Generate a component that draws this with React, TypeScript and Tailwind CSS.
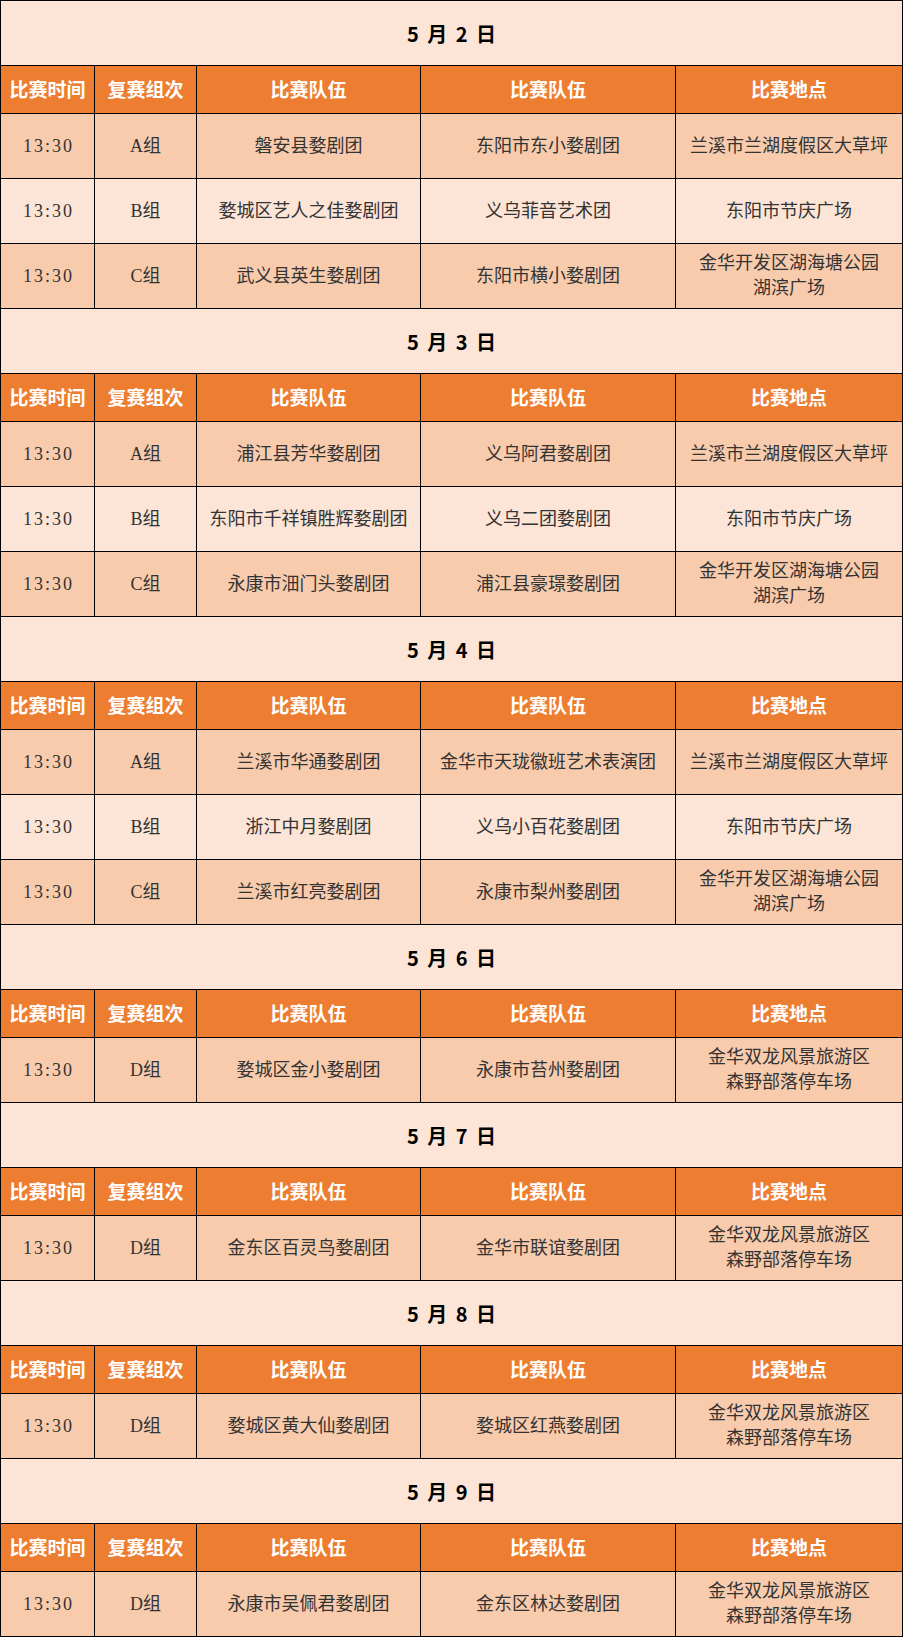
type Match = {
  time: string
  group: string
  teamA: string
  teamB: string
  place: string[]
}

type Day = {
  date: string
  matches: Match[]
}

const LANXI = ["兰溪市兰湖度假区大草坪"]
const DONGYANG = ["东阳市节庆广场"]
const JINHUA = ["金华开发区湖海塘公园", "湖滨广场"]
const SHUANGLONG = ["金华双龙风景旅游区", "森野部落停车场"]

const days: Day[] = [
  {
    date: "5 月 2 日",
    matches: [
      { time: "13:30", group: "A组", teamA: "磐安县婺剧团", teamB: "东阳市东小婺剧团", place: LANXI },
      { time: "13:30", group: "B组", teamA: "婺城区艺人之佳婺剧团", teamB: "义乌菲音艺术团", place: DONGYANG },
      { time: "13:30", group: "C组", teamA: "武义县英生婺剧团", teamB: "东阳市横小婺剧团", place: JINHUA },
    ],
  },
  {
    date: "5 月 3 日",
    matches: [
      { time: "13:30", group: "A组", teamA: "浦江县芳华婺剧团", teamB: "义乌阿君婺剧团", place: LANXI },
      { time: "13:30", group: "B组", teamA: "东阳市千祥镇胜辉婺剧团", teamB: "义乌二团婺剧团", place: DONGYANG },
      { time: "13:30", group: "C组", teamA: "永康市沺门头婺剧团", teamB: "浦江县豪璟婺剧团", place: JINHUA },
    ],
  },
  {
    date: "5 月 4 日",
    matches: [
      { time: "13:30", group: "A组", teamA: "兰溪市华通婺剧团", teamB: "金华市天珑徽班艺术表演团", place: LANXI },
      { time: "13:30", group: "B组", teamA: "浙江中月婺剧团", teamB: "义乌小百花婺剧团", place: DONGYANG },
      { time: "13:30", group: "C组", teamA: "兰溪市红亮婺剧团", teamB: "永康市梨州婺剧团", place: JINHUA },
    ],
  },
  {
    date: "5 月 6 日",
    matches: [
      { time: "13:30", group: "D组", teamA: "婺城区金小婺剧团", teamB: "永康市苔州婺剧团", place: SHUANGLONG },
    ],
  },
  {
    date: "5 月 7 日",
    matches: [
      { time: "13:30", group: "D组", teamA: "金东区百灵鸟婺剧团", teamB: "金华市联谊婺剧团", place: SHUANGLONG },
    ],
  },
  {
    date: "5 月 8 日",
    matches: [
      { time: "13:30", group: "D组", teamA: "婺城区黄大仙婺剧团", teamB: "婺城区红燕婺剧团", place: SHUANGLONG },
    ],
  },
  {
    date: "5 月 9 日",
    matches: [
      { time: "13:30", group: "D组", teamA: "永康市吴佩君婺剧团", teamB: "金东区林达婺剧团", place: SHUANGLONG },
    ],
  },
]

const headers = ["比赛时间", "复赛组次", "比赛队伍", "比赛队伍", "比赛地点"]

const serif = "font-['Liberation_Serif','Noto_Sans_CJK_SC',serif]"

function Cell({ children, dark }: { children: React.ReactNode; dark: boolean }) {
  return (
    <div
      className={`flex h-[65px] flex-col items-center justify-center border-r border-b border-black text-center text-[18px] leading-[25px] text-[#333] ${serif} ${
        dark ? "bg-[#f8cbad]" : "bg-[#fce4d6]"
      }`}
    >
      {children}
    </div>
  )
}

function DaySection({ day }: { day: Day }) {
  return (
    <>
      <div className="col-span-5 flex h-[65px] items-center justify-center border-r border-b border-black bg-[#fce4d6] pt-[2px] font-['Noto_Sans_CJK_SC',sans-serif] text-[20px] font-bold text-black [word-spacing:4px]">
        {day.date}
      </div>
      {headers.map((h, i) => (
        <div
          key={i}
          className="flex h-[48px] items-center justify-center border-r border-b border-black bg-[#ed7d31] font-['Noto_Sans_CJK_SC',serif] text-[19px] font-bold text-white"
        >
          {h}
        </div>
      ))}
      {day.matches.map((m, i) => {
        const dark = i % 2 === 0
        return (
          <div key={i} className="contents">
            <Cell dark={dark}>
              <span className="pl-[2px] tracking-[2px]">{m.time}</span>
            </Cell>
            <Cell dark={dark}>{m.group}</Cell>
            <Cell dark={dark}>{m.teamA}</Cell>
            <Cell dark={dark}>{m.teamB}</Cell>
            <Cell dark={dark}>
              {m.place.map((line) => (
                <span key={line} className="block">
                  {line}
                </span>
              ))}
            </Cell>
          </div>
        )
      })}
    </>
  )
}

export default function App() {
  return (
    <div className="w-[903px] bg-white">
      <div className="grid grid-cols-[94px_102px_224px_255px_227px] border-t border-l border-black">
        {days.map((d) => (
          <DaySection key={d.date} day={d} />
        ))}
      </div>
    </div>
  )
}
